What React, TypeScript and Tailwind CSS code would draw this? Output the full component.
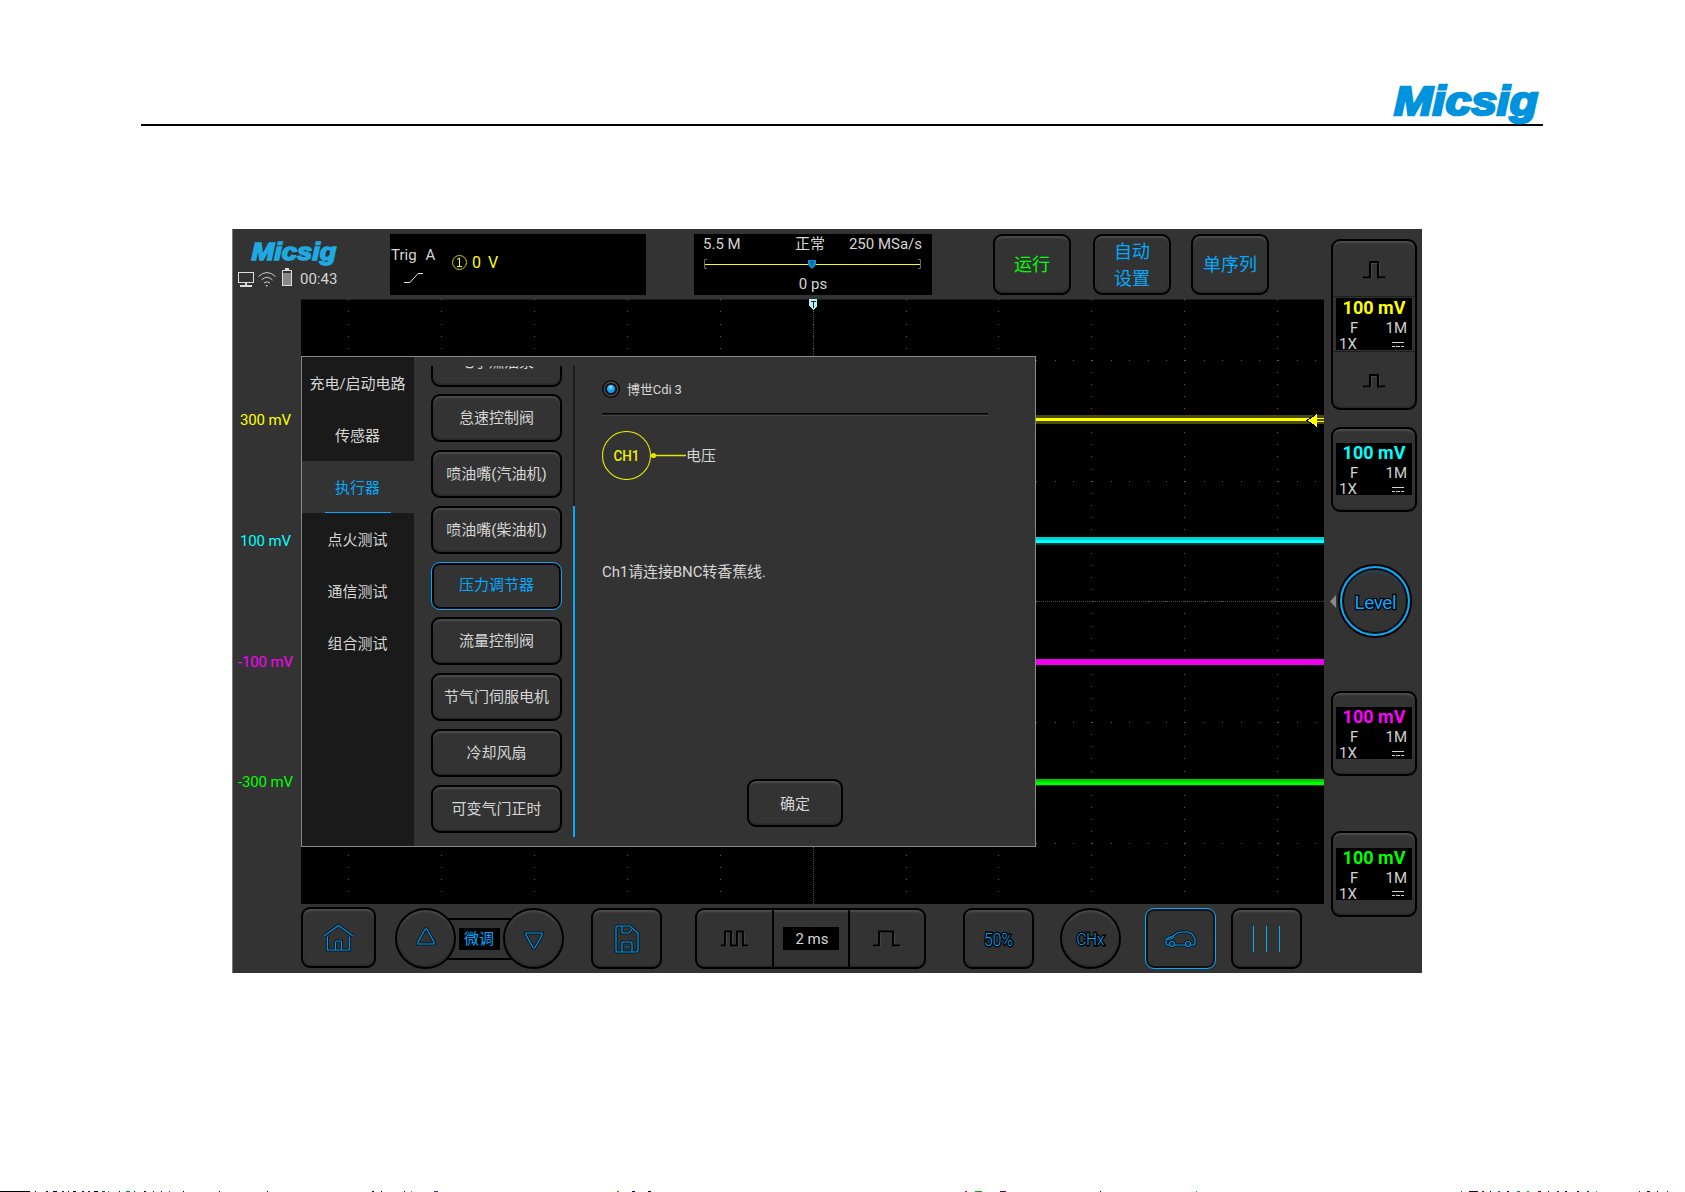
import type { ReactNode } from 'react'
import clsx from 'clsx'

const tabs = ['充电/启动电路', '传感器', '执行器', '点火测试', '通信测试', '组合测试']

const tests = [
  '电子燃油泵',
  '怠速控制阀',
  '喷油嘴(汽油机)',
  '喷油嘴(柴油机)',
  '压力调节器',
  '流量控制阀',
  '节气门伺服电机',
  '冷却风扇',
  '可变气门正时',
]

const button =
  'flex items-center justify-center rounded-[9px] border-2 border-black bg-[#333] shadow-[inset_0_2px_2px_rgba(255,255,255,0.13),inset_0_-1px_2px_rgba(0,0,0,0.35)]'

const round =
  'flex items-center justify-center rounded-full border-2 border-black bg-[#333] shadow-[inset_0_2px_2px_rgba(255,255,255,0.11),inset_0_-1px_2px_rgba(0,0,0,0.35)]'

// Blue line icon with a dark rim, as on the hardware-style keys
function LineIcon({ w, h, children }: { w: number; h: number; children: ReactNode }) {
  return (
    <svg width={w} height={h} viewBox={`0 0 ${w} ${h}`} fill="none" className="overflow-visible">
      <g stroke="#0a1620" strokeWidth="3.2">{children}</g>
      <g stroke="#0597e6" strokeWidth="1.2">{children}</g>
    </svg>
  )
}

function Logo({ width, height, size, color }: { width: number; height: number; size: number; color: string }) {
  return (
    <svg width={width} height={height} className="block overflow-visible">
      <text
        x={size / 40}
        y={size * 0.745}
        fontFamily="Liberation Sans, Arial, sans-serif"
        fontWeight="700"
        fontStyle="italic"
        fontSize={size}
        textLength={width - size / 20}
        lengthAdjust="spacingAndGlyphs"
        fill={color}
        stroke={color}
        strokeWidth={size / 16}
      >
        Micsig
      </text>
    </svg>
  )
}

function Pulse({ h }: { h: number }) {
  return (
    <svg width="22" height={h} fill="none">
      <path d={`M1 ${h - 0.5}H8V2H16V${h - 0.5}H22`} stroke="#5a5a5a" strokeWidth="1" />
      <path d={`M0 ${h - 1.5}H7V1H15V${h - 1.5}H22`} stroke="#000" strokeWidth="2" />
    </svg>
  )
}

function ChannelBox({ color }: { color: string }) {
  return (
    <div className="h-[52px] w-[76px] bg-black text-[15px] leading-4 text-[#d2d2d2]">
      <div className={clsx('mt-[-1px] text-center text-[18px] font-bold leading-[21px]', color)}>100 mV</div>
      <div className="flex justify-between pl-[14px] pr-[5px] pt-[2px]">
        <span>F</span>
        <span>1M</span>
      </div>
      <div className="flex items-center justify-between pl-[3px] pr-2">
        <span>1X</span>
        <svg width="12" height="5" shapeRendering="crispEdges" fill="#d2d2d2">
          <rect width="12" height="1" />
          <rect y="4" width="3" height="1" />
          <rect x="4" y="4" width="4" height="1" />
          <rect x="9" y="4" width="3" height="1" />
        </svg>
      </div>
    </div>
  )
}

function TopBar() {
  return (
    <div className="flex h-[70px] items-start pt-[5px]">
      <div className="w-[158px] pl-[6px] pt-[8px]">
        <div className="pl-[13px]">
          <Logo width={86} height={22} size={24} color="#1fa9e1" />
        </div>
        <div className="mt-[4px] flex items-center text-[15px] leading-[19px] text-[#d6d6d6]">
          <svg width="17" height="16" fill="none" stroke="#dcdcdc" shapeRendering="crispEdges">
            <rect x="0.5" y="1.5" width="15" height="10" />
            <path d="M8 12V14M2 14.5H14" strokeWidth="2" />
          </svg>
          <svg width="18" height="16" fill="none" stroke="#c8c8c8" className="ml-[3px]">
            <path d="M0.5 5.5Q9 -2.5 17.5 5.5M3.5 9Q9 3.5 14.5 9M6 12Q9 9.5 12 12" />
            <rect x="8" y="14" width="1.5" height="1.5" fill="#c8c8c8" stroke="none" />
          </svg>
          <svg width="10" height="18" className="ml-[6px] mt-[-3px]" shapeRendering="crispEdges">
            <rect x="3" y="0" width="4" height="2" fill="#dcdcdc" />
            <rect x="0.5" y="2.5" width="9" height="15" fill="#333" stroke="#dcdcdc" />
            <rect x="1" y="5" width="8" height="12" fill="#888" />
          </svg>
          <span className="ml-[8px] pt-[2px]">00:43</span>
        </div>
      </div>

      <div className="flex h-[61px] w-[256px] bg-black pl-px text-[#d6d6d6]">
        <div className="w-[61px] pt-[13px] text-[15px] leading-4">
          <div className="flex gap-[9px]">
            <span>Trig</span>
            <span>A</span>
          </div>
          <svg width="20" height="12" className="ml-[13px] mt-[9px]" fill="none" stroke="#e8e8e8">
            <path d="M0 10.5H6L14 1.5H19" />
          </svg>
        </div>
        <div className="flex items-center pb-[4px] text-[16px] leading-4 text-[#ff0]">
          <svg width="15" height="15" fill="none" stroke="#d0d000">
            <circle cx="7.5" cy="7.5" r="7" />
            <path d="M5 4.5L7.5 3V11.5M5 11.5H10" stroke="#ff0" />
          </svg>
          <span className="ml-[5px]">0</span>
          <span className="ml-[7px]">V</span>
        </div>
      </div>

      <div className="ml-12 h-[61px] w-[238px] bg-black pt-[2px] text-[15px] leading-4 text-[#d6d6d6]">
        <div className="flex justify-between pl-[9px] pr-[10px]">
          <span className="w-[68px]">5.5 M</span>
          <span>正常</span>
          <span>250 MSa/s</span>
        </div>
        <svg width="218" height="14" className="mx-[10px] mt-[4px] block">
          <path d="M3 3.5H0.5V12.5H3M214 3.5H216.5V12.5H214" fill="none" stroke="#667" />
          <rect x="1" y="8" width="215" height="1" fill="#ff0" />
          <path d="M104 4H112V9L108 13L104 9Z" fill="#0a8fd8" />
          <path d="M106 6H110M108 6V10" stroke="#04406a" />
        </svg>
        <div className="mt-[6px] text-center">0 ps</div>
      </div>

      <button className={clsx(button, 'ml-[61px] h-[61px] w-[78px] text-[18px] text-[#0f0]')}>运行</button>
      <button className={clsx(button, 'ml-[22px] h-[61px] w-[78px] flex-col text-[18px] leading-[27px] text-[#0af]')}>
        <span>自动</span>
        <span>设置</span>
      </button>
      <button className={clsx(button, 'ml-5 h-[61px] w-[78px] text-[18px] text-[#0af]')}>单序列</button>
    </div>
  )
}

function Graticule() {
  const cols = Array.from({ length: 11 }, (_, i) => Math.round(47.1 + i * 92.9))
  const rows = [61, 182, 302, 423, 544]
  return (
    <svg width="1023" height="605" className="block" shapeRendering="crispEdges">
      <rect width="1023" height="605" fill="#000" />
      <rect width="1023" height="1" fill="#1a1a1a" />
      <g fill="#5c5c5c">
        {cols.map((x) =>
          Array.from({ length: 50 }, (_, i) => (
            <rect key={`${x}-${i}`} x={x} y={Math.round(0.4 + i * 12.08)} width="1" height="1" />
          )),
        )}
        {rows.map((y) =>
          Array.from({ length: 55 }, (_, i) => (
            <rect key={`${y}-${i}`} x={Math.round(9.8 + i * 18.6)} y={y} width="1" height="1" />
          )),
        )}
      </g>
      <path d="M512.5 0V605M0 302.5H1023" stroke="#4c4c4c" strokeDasharray="1 1" />

      <rect y="116" width="1023" height="9" fill="#4a4a00" />
      <rect y="119" width="1023" height="3" fill="#ff0" />
      <rect y="238" width="1023" height="3" fill="#00cfcf" />
      <rect y="241" width="1023" height="3" fill="#0ff" />
      <rect y="244" width="1023" height="2" fill="#003a3a" />
      <rect y="360" width="1023" height="6" fill="#ee00ee" />
      <rect y="480" width="1023" height="3" fill="#00cc00" />
      <rect y="483" width="1023" height="3" fill="#0f0" />
      <rect y="486" width="1023" height="1" fill="#004400" />

      <path d="M1005 121.5L1016 114V129Z" fill="#000" />
      <rect x="1016" y="116" width="7" height="9" fill="#4a4a00" />
      <rect x="1016" y="119" width="7" height="1" fill="#ff0" />
      <rect x="1016" y="122" width="7" height="1" fill="#ff0" />
      <path d="M1007 121.5L1016 115V128Z" fill="#ff0" />
      <path d="M508 0H516V7L512 11L508 7Z" fill="#b8f0f0" />
      <path d="M510 2.5H515M512.5 2V9" stroke="#123" />
    </svg>
  )
}

function TestDialog() {
  return (
    <div className="absolute left-0 top-[57px] flex h-[491px] w-[735px] border border-[#8a8a8a] bg-[#333] text-[15px] text-[#d6d6d6]">
      <div className="flex w-28 flex-col bg-[#1a1a1a]">
        {tabs.map((t) => {
          const active = t === '执行器'
          return (
            <div key={t} className={clsx('flex h-[52px] flex-col items-center', active && 'bg-[#333] text-[#0af]')}>
              <div className="flex h-[51px] items-center pr-px pt-[3px]">{t}</div>
              {active && <div className="h-px w-[66px] bg-[#0af]" />}
            </div>
          )
        })}
      </div>

      <div className="ml-[17px] mt-[9px] flex h-[471px] w-[144px] overflow-hidden">
        <div className="mt-[-27.5px] flex w-[131px] shrink-0 flex-col gap-[7.8px]">
          {tests.map((t) =>
            t === '压力调节器' ? (
              <button
                key={t}
                className="flex h-12 shrink-0 items-center justify-center rounded-[9px] border border-[#0af] bg-[#333] text-[#0af] shadow-[inset_0_0_0_2px_#000]"
              >
                {t}
              </button>
            ) : (
              <button key={t} className={clsx(button, 'h-12 shrink-0')}>
                {t}
              </button>
            ),
          )}
        </div>
        <div className="ml-[11px] w-[2px] shrink-0 bg-[#1a1a1a]">
          <div className="mt-[140px] h-[331px] bg-[#0af]" />
        </div>
      </div>

      <div className="ml-[27px] w-[386px]">
        <div className="mt-[22px] flex h-5 items-center text-[13px]">
          <svg width="18" height="18">
            <defs>
              <radialGradient id="dot" cx="0.45" cy="0.3" r="0.7">
                <stop offset="0" stopColor="#9be0ff" />
                <stop offset="0.5" stopColor="#17aaff" />
                <stop offset="1" stopColor="#0088e0" />
              </radialGradient>
            </defs>
            <circle cx="9" cy="9" r="8.2" fill="#4c4c4c" stroke="#0c0c0c" strokeWidth="1.6" />
            <circle cx="9" cy="9" r="6" fill="#0a0a0a" />
            <circle cx="9" cy="9" r="4.2" fill="url(#dot)" />
          </svg>
          <span className="ml-[7px] pt-[2px] tracking-[-0.1px]">博世Cdi 3</span>
        </div>
        <div className="mt-[14px] h-[3px] border-b border-t border-b-[#444] border-t-black bg-[#1c1c1c]" />
        <div className="mt-[15px] flex h-[49px] items-center">
          <svg width="84" height="49" fill="none">
            <circle cx="24.5" cy="24.5" r="24" stroke="#e6e600" strokeWidth="1.1" />
            <circle cx="51.5" cy="24.5" r="2.6" fill="#e6e600" />
            <path d="M49 24.5H84" stroke="#e6e600" strokeWidth="1.6" />
            <text x="24.5" y="30" textAnchor="middle" textLength="26" lengthAdjust="spacingAndGlyphs" fontSize="15" fontFamily="Roboto, sans-serif" fontWeight="500" fill="#f0f000">
              CH1
            </text>
          </svg>
          <span className="pt-px">电压</span>
        </div>
        <div className="mt-[81px] h-[22px] leading-[22px] tracking-[-0.1px]">Ch1请连接BNC转香蕉线.</div>
        <button className={clsx(button, 'ml-[145px] mt-[196px] h-12 w-24 pt-[2px]')}>确定</button>
      </div>
    </div>
  )
}

function BottomBar() {
  return (
    <div className="flex h-[69px] items-center pb-0 pl-[69px] text-[#0af]">
      <button className={clsx(button, 'mb-[2px] h-[61px] w-[75px]')}>
        <LineIcon w={31} h={27}>
          <path d="M1 12L15.5 1.5L30 12M4.5 12.5V26H26.5V12.5M12.5 26V18.5Q12.5 17 14 17H17Q18.5 17 18.5 18.5V26" />
        </LineIcon>
      </button>

      <div className="ml-[19px] flex items-center">
        <button className={clsx(round, 'z-10 size-[61px] pb-[5px]')}>
          <LineIcon w={18} h={17}>
            <path d="M8 1.5Q9 0 10 1.5L17 14V16H1V14Z" />
          </LineIcon>
        </button>
        <div className="mx-[-9px] flex h-[42px] w-[65px] items-center justify-center border-y-2 border-black pr-px">
          <div className="flex h-[22px] w-[41px] items-center justify-center bg-black pt-px text-[15px]">微调</div>
        </div>
        <button className={clsx(round, 'z-10 size-[61px] pt-[4px]')}>
          <LineIcon w={18} h={17}>
            <path d="M8 15.5Q9 17 10 15.5L17 3V1H1V3Z" />
          </LineIcon>
        </button>
      </div>

      <button className={clsx(button, 'ml-[27px] h-[61px] w-[71px]')}>
        <LineIcon w={24} h={28}>
          <path d="M2 1H15L23 8V25L22 27H2L1 26V2ZM7 1V8H14L17 4M7 27V18L8 17H16L17 18V27M10 22H14" />
        </LineIcon>
      </button>

      <div className={clsx(button, 'ml-[33px] h-[61px] w-[231px]')}>
        <div className="flex h-full w-[75px] items-center justify-center">
          <svg width="28" height="17" fill="none">
            <path d="M1 16.5H5V2.5H11V16.5H17V2.5H23V16.5H28" stroke="#555" />
            <path d="M0 15.5H4V1.5H10V15.5H16V1.5H22V15.5H27" stroke="#000" strokeWidth="1.8" />
          </svg>
        </div>
        <div className="flex h-full w-[78px] items-center justify-center border-x-2 border-black">
          <div className="flex h-[23px] w-14 items-center justify-center bg-black pl-[2px] pt-px text-[15px] text-[#d6d6d6]">2 ms</div>
        </div>
        <div className="flex h-full w-[74px] items-center justify-center">
          <svg width="28" height="17" fill="none">
            <path d="M1 16.5H7V2.5H21V16.5H28" stroke="#555" />
            <path d="M0 15.5H6V1.5H20V15.5H27" stroke="#000" strokeWidth="1.8" />
          </svg>
        </div>
      </div>

      <button className={clsx(button, 'ml-[37px] h-[61px] w-[71px]')}>
        <svg width="32" height="20" className="overflow-visible">
          <text x="15.5" y="16.5" textAnchor="middle" textLength="29" lengthAdjust="spacingAndGlyphs" fontSize="19" fontFamily="Roboto, sans-serif" fontWeight="300" fill="#0af" stroke="#000" strokeWidth="3" paintOrder="stroke">
            50%
          </text>
        </svg>
      </button>
      <button className={clsx(round, 'ml-[26px] size-[61px]')}>
        <svg width="32" height="20" className="overflow-visible">
          <text x="15.5" y="16" textAnchor="middle" textLength="28" lengthAdjust="spacingAndGlyphs" fontSize="17" fontFamily="Roboto, sans-serif" fontWeight="300" fill="#0af" stroke="#000" strokeWidth="3" paintOrder="stroke">
            CHx
          </text>
        </svg>
      </button>
      <button className="ml-6 flex h-[61px] w-[71px] items-center justify-center rounded-[9px] border border-[#0af] shadow-[inset_0_0_0_2px_#111]">
        <LineIcon w={31} h={16}>
          <path d="M4 14H2L1 13V9L3 7L8 5L13 1.5L17 1H23L27 3L30 8V13L29 14H26M10 14H20M1 8H6L9 6" />
          <circle cx="7" cy="13" r="2.5" />
          <circle cx="23" cy="13" r="2.5" />
        </LineIcon>
      </button>
      <button className={clsx(button, 'ml-[15px] h-[61px] w-[71px] gap-3')}>
        <span className="h-[26px] w-px bg-[#0af]" />
        <span className="h-[26px] w-px bg-[#0af]" />
        <span className="h-[26px] w-px bg-[#0af]" />
      </button>
    </div>
  )
}

function SidePanel() {
  return (
    <div className="flex w-[98px] flex-col pl-[7px] pt-[10px]">
      <div className={clsx(button, 'h-[171px] w-[86px] flex-col')}>
        <div className="flex h-[55px] items-center pt-[2px]">
          <Pulse h={18} />
        </div>
        <div className="flex w-full justify-center border-y border-[#1c1c1c] py-px">
          <ChannelBox color="text-[#ff0]" />
        </div>
        <div className="flex h-[57px] flex-1 items-center pt-px">
          <Pulse h={14} />
        </div>
      </div>
      <div className={clsx(button, 'mt-[17px] h-[85px] w-[86px] pb-px')}>
        <ChannelBox color="text-[#0ff]" />
      </div>
      <div className="ml-[-1px] mt-[52px] flex items-center">
        <svg width="6" height="13">
          <path d="M0 6.5L6 0V13Z" fill="#8a8a8a" />
        </svg>
        <div className="ml-[2px] flex size-[74px] items-center justify-center rounded-full border-2 border-black">
          <div className="flex size-[70px] items-center justify-center rounded-full border-2 border-[#0af] shadow-[inset_0_0_0_2px_#0b0b0b,inset_0_4px_3px_rgba(0,120,190,0.25)]">
            <svg width="50" height="24">
              <text x="25.5" y="20" textAnchor="middle" textLength="42" fontSize="19" fontFamily="Roboto, sans-serif" fill="#0af" stroke="#000" strokeWidth="2.6" paintOrder="stroke">
                Level
              </text>
            </svg>
          </div>
        </div>
      </div>
      <div className={clsx(button, 'mt-[53px] h-[85px] w-[86px] pb-px')}>
        <ChannelBox color="text-[#f0f]" />
      </div>
      <div className={clsx(button, 'mt-[55px] h-[86px] w-[86px] pb-px')}>
        <ChannelBox color="text-[#0f0]" />
      </div>
    </div>
  )
}

const specks: [number, number, string][] = [
  [0, 30, '#000'], [35, 1, '#000'], [46, 2, '#400'], [53, 4, '#003'], [62, 2, '#036'], [68, 1, '#000'], [73, 3, '#000'],
  [82, 2, '#303'], [88, 2, '#036'], [94, 4, '#000'], [102, 3, '#063'], [108, 1, '#099'], [119, 1, '#000'], [126, 4, '#086'],
  [134, 1, '#00a'], [144, 2, '#006'], [153, 1, '#900'], [161, 1, '#009'], [169, 1, '#06c'], [183, 1, '#000'], [219, 1, '#000'],
  [267, 1, '#000'], [372, 2, '#006'], [381, 1, '#000'], [404, 1, '#006'], [411, 1, '#0aa'], [434, 4, '#33a'], [617, 2, '#960'],
  [632, 3, '#00a'], [648, 3, '#300'], [965, 2, '#c09'], [975, 7, '#0a0'], [1000, 6, '#604'], [1100, 1, '#000'], [1196, 1, '#0aa'],
  [1461, 1, '#066'], [1469, 9, '#303'], [1482, 2, '#900'], [1490, 1, '#000'], [1498, 2, '#06a'], [1507, 2, '#00a'],
  [1517, 3, '#088'], [1527, 2, '#0a0'], [1538, 3, '#900'], [1548, 1, '#000'], [1557, 2, '#606'], [1565, 2, '#006'],
  [1577, 2, '#009'], [1587, 2, '#060'], [1596, 1, '#0aa'], [1639, 1, '#900'], [1647, 3, '#306'], [1657, 1, '#000'], [1667, 1, '#900'],
]

export default function App() {
  return (
    <div className="flex h-[1192px] w-[1685px] flex-col overflow-hidden bg-white font-['Roboto','Noto_Sans_CJK_SC',sans-serif]">
      <header className="ml-[141px] flex h-[126px] w-[1402px] items-end justify-end border-b-2 border-black pr-[4px]">
        <Logo width={146} height={39} size={40} color="#0093dd" />
      </header>

      <main className="ml-[232px] mt-[103px] flex h-[744px] w-[1190px] bg-[#333] shadow-[inset_1px_0_0_#777]">
        <div className="w-[1092px]">
          <TopBar />
          <div className="flex h-[605px]">
            <div className="flex w-[69px] flex-col gap-[100.8px] pr-[2px] pt-[111px] text-center text-[15px] leading-5 tracking-[-0.1px]">
              <div className="text-[#ff0]">300 mV</div>
              <div className="text-[#0ff]">100 mV</div>
              <div className="text-[#f0f]">-100 mV</div>
              <div className="text-[#0f0]">-300 mV</div>
            </div>
            <div className="relative">
              <Graticule />
              <TestDialog />
            </div>
          </div>
          <BottomBar />
        </div>
        <SidePanel />
      </main>

      <svg width="1685" height="1" className="mt-auto block" shapeRendering="crispEdges">
        {specks.map(([x, w, c]) => (
          <rect key={x} x={x} width={w} height="1" fill={c} />
        ))}
      </svg>
    </div>
  )
}
